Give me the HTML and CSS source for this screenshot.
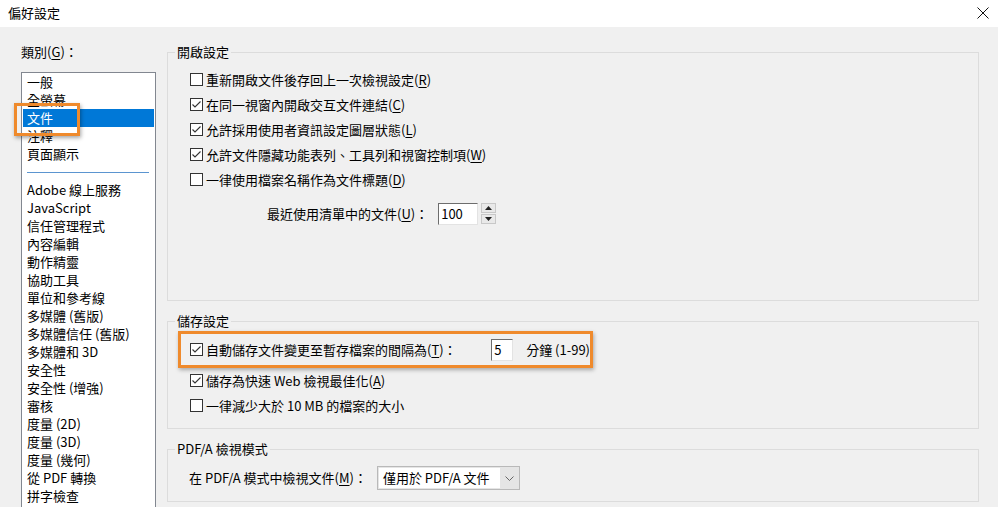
FILE: index.html
```html
<!DOCTYPE html>
<html lang="zh-Hant">
<head>
<meta charset="utf-8">
<title>偏好設定</title>
<link rel="stylesheet" href="styles.css">
</head>
<body>
<div class="titlebar">
  <span class="title">偏好設定</span>
  <svg class="close" width="12" height="12" viewBox="0 0 12 12"><path d="M0.5 0.5 L11.5 11.5 M11.5 0.5 L0.5 11.5" stroke="#111" stroke-width="1" fill="none"/></svg>
</div>
<div class="main">
  <div class="left">
    <div class="cat-label">類別(<u>G</u>)：</div>
    <div class="list">
      <div class="item">一般</div>
      <div class="item">全螢幕</div>
      <div class="item selected">文件</div>
      <div class="item">注釋</div>
      <div class="item">頁面顯示</div>
      <div class="sep"></div>
      <div class="item">Adobe 線上服務</div>
      <div class="item">JavaScript</div>
      <div class="item">信任管理程式</div>
      <div class="item">內容編輯</div>
      <div class="item">動作精靈</div>
      <div class="item">協助工具</div>
      <div class="item">單位和參考線</div>
      <div class="item">多媒體 (舊版)</div>
      <div class="item">多媒體信任 (舊版)</div>
      <div class="item">多媒體和 3D</div>
      <div class="item">安全性</div>
      <div class="item">安全性 (增強)</div>
      <div class="item">審核</div>
      <div class="item">度量 (2D)</div>
      <div class="item">度量 (3D)</div>
      <div class="item">度量 (幾何)</div>
      <div class="item">從 PDF 轉換</div>
      <div class="item">拼字檢查</div>
    </div>
  </div>
  <div class="right">
    <fieldset class="group g-open">
      <legend>開啟設定</legend>
      <div class="group-body body-open">
        <label class="row"><span class="cb"></span>重新開啟文件後存回上一次檢視設定(<u>R</u>)</label>
        <label class="row"><span class="cb checked"></span>在同一視窗內開啟交互文件連結(<u>C</u>)</label>
        <label class="row"><span class="cb checked"></span>允許採用使用者資訊設定圖層狀態(<u>L</u>)</label>
        <label class="row"><span class="cb checked"></span>允許文件隱藏功能表列、工具列和視窗控制項(<u>W</u>)</label>
        <label class="row"><span class="cb"></span>一律使用檔案名稱作為文件標題(<u>D</u>)</label>
        <div class="spin-row">
          <span class="spin-label">最近使用清單中的文件(<u>U</u>)：</span>
          <span class="textbox tb-100">100</span>
          <span class="spinner">
            <span class="spin-btn"><svg width="7" height="4" viewBox="0 0 7 4"><path d="M3.5 0 L7 4 L0 4 Z" fill="#222"/></svg></span>
            <span class="spin-btn"><svg width="7" height="4" viewBox="0 0 7 4"><path d="M0 0 L7 0 L3.5 4 Z" fill="#222"/></svg></span>
          </span>
        </div>
      </div>
    </fieldset>

    <fieldset class="group g-save">
      <legend>儲存設定</legend>
      <div class="group-body body-save">
        <div class="highlight-row">
          <label class="row row-auto"><span class="cb checked"></span>自動儲存文件變更至暫存檔案的間隔為(<u>T</u>)：</label>
          <span class="textbox tb-5">5</span>
          <span class="unit">分鐘 (1-99)</span>
        </div>
        <label class="row"><span class="cb checked"></span>儲存為快速 Web 檢視最佳化(<u>A</u>)</label>
        <label class="row"><span class="cb"></span>一律減少大於 10 MB 的檔案的大小</label>
      </div>
    </fieldset>

    <fieldset class="group g-pdfa">
      <legend>PDF/A 檢視模式</legend>
      <div class="group-body body-pdfa">
        <span class="pdfa-label">在 PDF/A 模式中檢視文件(<u>M</u>)：</span>
        <span class="select">
          <span class="select-text">僅用於 PDF/A 文件</span>
          <span class="select-arrow"><svg width="9" height="5" viewBox="0 0 9 5"><path d="M0.5 0.5 L4.5 4.5 L8.5 0.5" stroke="#666" fill="none"/></svg></span>
        </span>
      </div>
    </fieldset>
  </div>
</div>
</body>
</html>
```

FILE: styles.css
```css
* { box-sizing: border-box; }

html, body {
  margin: 0;
  padding: 0;
}

body {
  width: 998px;
  height: 507px;
  overflow: hidden;
  background: #f0f0f0;
  font-family: "Noto Sans CJK TC", "Noto Sans", sans-serif;
  font-size: 13px;
  color: #000;
}

u { text-underline-offset: 2px; }

.titlebar {
  height: 27px;
  background: #fff;
  display: flex;
  align-items: center;
  justify-content: space-between;
  padding: 0 8px 2px 8px;
}

.title {
  font-size: 13px;
  line-height: 18px;
}

.close {
  margin-right: 1px;
}

.main {
  display: flex;
  height: 480px;
  overflow: hidden;
}

.left {
  width: 167px;
  padding-left: 21px;
  padding-top: 16px;
}

.cat-label {
  height: 18px;
  line-height: 18px;
  margin-bottom: 11px;
}

.list {
  width: 135px;
  height: 435px;
  background: #fff;
  border: 1px solid #828790;
  border-bottom: none;
  padding: 0 1px;
}

.item {
  height: 18px;
  line-height: 18px;
  padding-left: 4px;
  white-space: nowrap;
}

.item.selected {
  background: #0078d7;
  color: #fff;
  position: relative;
}

.item.selected::after {
  content: "";
  position: absolute;
  left: -9px;
  top: -6px;
  width: 60px;
  height: 27px;
  border: 3px solid #ef8a2c;
  box-shadow: 1px 2px 4px rgba(0, 0, 0, 0.35);
}

.sep {
  height: 18px;
  display: flex;
  align-items: center;
  padding: 0 5px 0 4px;
}

.sep::before {
  content: "";
  flex: 1;
  height: 1px;
  background: #5b95d0;
}

.right {
  width: 812px;
  padding-top: 16px;
}

.group {
  margin: 0;
  padding: 0;
  border: 1px solid #dcdcdc;
  min-width: 0;
}

.group legend {
  margin-left: 7px;
  padding: 0 2px;
  line-height: 18px;
  height: 18px;
}

.group-body {
  padding-left: 22px;
}

.body-open {
  height: 239px;
  padding-top: 6px;
}

.g-save {
  margin-top: 11px;
}

.body-save {
  height: 98px;
  padding-top: 1px;
}

.g-pdfa {
  margin-top: 11px;
}

.body-pdfa {
  height: 43px;
  display: flex;
  align-items: flex-start;
  padding-top: 8px;
  padding-left: 21px;
}

.row {
  display: flex;
  align-items: center;
  height: 25px;
  white-space: nowrap;
}

.cb {
  width: 13px;
  height: 13px;
  border: 1px solid #333;
  background: #fff;
  margin-right: 3px;
  flex: none;
  position: relative;
}

.cb.checked {
  background: #fff url("data:image/svg+xml,%3Csvg xmlns='http://www.w3.org/2000/svg' width='11' height='11' viewBox='0 0 11 11'%3E%3Cpath d='M1.5 5.5 L4 8 L9.5 2.5' stroke='%23333' stroke-width='1.1' fill='none'/%3E%3C/svg%3E") no-repeat center;
}

.spin-row {
  display: flex;
  align-items: center;
  margin-top: 10px;
  padding-left: 77px;
  height: 23px;
}

.spin-label {
  margin-right: 10px;
  white-space: nowrap;
}

.textbox {
  display: inline-flex;
  align-items: center;
  height: 22px;
  background: #fff;
  border-top: 1px solid #6d6d6d;
  border-left: 1px solid #6d6d6d;
  border-right: 1px solid #e3e3e3;
  border-bottom: 1px solid #e3e3e3;
  padding-left: 2px;
  font-size: 13px;
  line-height: 18px;
}

.tb-100 {
  width: 40px;
}

.spinner {
  display: flex;
  flex-direction: column;
  gap: 1px;
  margin-left: 3px;
}

.spin-btn {
  width: 15px;
  height: 10px;
  background: #e9e9e9;
  border: 1px solid #c8c8c8;
  display: flex;
  align-items: center;
  justify-content: center;
}

.highlight-row {
  width: 415px;
  height: 37px;
  margin-left: -12px;
  border: 3px solid #ef8a2c;
  box-shadow: 1px 2px 4px rgba(0, 0, 0, 0.3);
  display: flex;
  align-items: center;
  padding-left: 9px;
}

.row-auto {
  width: 302px;
}

.tb-5 {
  width: 22px;
  height: 22px;
}

.unit {
  margin-left: 13px;
  white-space: nowrap;
}

.pdfa-label {
  line-height: 23px;
  margin-right: 10px;
  white-space: nowrap;
}

.select {
  display: flex;
  width: 143px;
  height: 24px;
  border: 1px solid #b9b9b9;
  background: #e5e5e5;
}

.select-text {
  flex: 1;
  background: #fff;
  margin: 1px 0 1px 1px;
  padding-left: 4px;
  line-height: 20px;
  white-space: nowrap;
}

.select-arrow {
  width: 19px;
  display: flex;
  align-items: center;
  justify-content: center;
}
```
